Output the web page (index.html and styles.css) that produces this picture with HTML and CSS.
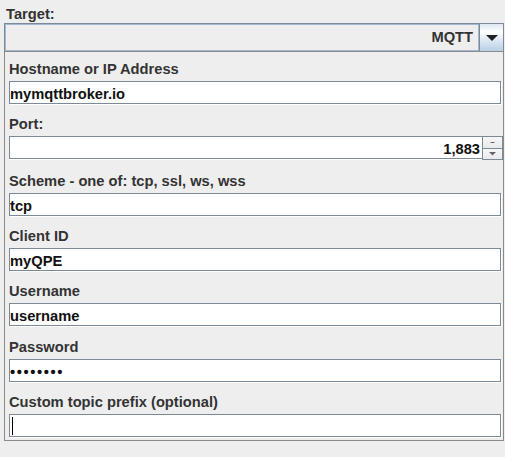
FILE: index.html
```html
<!DOCTYPE html>
<html>
<head>
<meta charset="utf-8">
<link rel="stylesheet" href="styles.css">
</head>
<body>
<div class="app">
  <div class="target-label">Target:</div>
  <div class="combo">
    <div class="combo-display">MQTT</div>
    <div class="combo-button">
      <svg width="12" height="6" viewBox="0 0 12 6"><polygon points="0,0 12,0 6,6" fill="#222"/></svg>
    </div>
  </div>
  <div class="panel">
    <div class="field-group">
      <div class="field-label">Hostname or IP Address</div>
      <div class="text-field">mymqttbroker.io</div>
    </div>
    <div class="field-group">
      <div class="field-label">Port:</div>
      <div class="spinner">
        <div class="spinner-text">1,883</div>
        <div class="spinner-buttons">
          <div class="spin-btn">
            <svg width="5" height="2" viewBox="0 0 5 2"><polygon points="1,0 4,0 5,1 0,1" fill="#666"/></svg>
          </div>
          <div class="spin-btn">
            <svg width="7" height="4" viewBox="0 0 7 4"><polygon points="0,0 7,0 3.5,3.5" fill="#666"/></svg>
          </div>
        </div>
      </div>
    </div>
    <div class="field-group">
      <div class="field-label">Scheme - one of: tcp, ssl, ws, wss</div>
      <div class="text-field">tcp</div>
    </div>
    <div class="field-group">
      <div class="field-label">Client ID</div>
      <div class="text-field">myQPE</div>
    </div>
    <div class="field-group">
      <div class="field-label">Username</div>
      <div class="text-field">username</div>
    </div>
    <div class="field-group">
      <div class="field-label">Password</div>
      <div class="text-field password">&#8226;&#8226;&#8226;&#8226;&#8226;&#8226;&#8226;&#8226;</div>
    </div>
    <div class="field-group">
      <div class="field-label">Custom topic prefix (optional)</div>
      <div class="text-field empty"><span class="caret"></span></div>
    </div>
  </div>
</div>
</body>
</html>
```

FILE: styles.css
```css
html, body {
  margin: 0;
  padding: 0;
  background: #eeeeee;
}

body {
  font-family: "Liberation Sans", Arial, sans-serif;
  font-weight: bold;
  font-size: 14.7px;
  color: #333333;
}

.app {
  padding: 6px 1px 0 4px;
}

.target-label {
  line-height: 17px;
  padding-left: 2px;
}

.combo {
  display: flex;
  box-sizing: border-box;
  height: 29px;
  border: 1px solid #7a8a99;
}

.combo-display {
  flex: 1;
  border: 1px solid #a3b8cc;
  text-align: right;
  padding: 4px 5px 0 0;
  line-height: 17px;
  color: #333333;
}

.combo-button {
  width: 23px;
  border-left: 1px solid #7a8a99;
  background: linear-gradient(to bottom, #dde8f3 0%, #ffffff 30%, #dde8f3 60%, #b8cfe5 100%);
  display: flex;
  align-items: center;
  justify-content: center;
}

.combo-button svg {
  display: block;
}

.panel {
  margin-top: -1px;
  border: 1px solid #8a8a8a;
  padding: 9px 2px 2px 4px;
}

.field-group + .field-group {
  margin-top: 12.33px;
}

.field-label {
  line-height: 17px;
  margin-bottom: 3px;
}

.text-field {
  box-sizing: border-box;
  width: 492px;
  height: 23px;
  margin-bottom: 1px;
  border: 1px solid #7a8a99;
  background: #ffffff;
  box-shadow: 1px 1px 0 #ffffff;
  padding: 4px 1px 0 0;
  line-height: 17px;
  color: #111111;
  white-space: nowrap;
  overflow: hidden;
}

.password {
  letter-spacing: 1.6px;
}

.text-field.empty {
  padding: 0;
}

.caret {
  display: block;
  width: 1px;
  height: 18px;
  margin: 2px 0 0 2px;
  background: #000000;
}

.spinner {
  display: flex;
  width: 494px;
  height: 24px;
}

.spinner-text {
  flex: 1;
  box-sizing: border-box;
  height: 23px;
  border: 1px solid #7a8a99;
  border-right: none;
  background: #ffffff;
  box-shadow: 0 1px 0 #ffffff;
  text-align: right;
  padding: 4px 2px 0 0;
  line-height: 17px;
  color: #111111;
}

.spinner-buttons {
  width: 21px;
  display: flex;
  flex-direction: column;
}

.spin-btn {
  flex: 1;
  box-sizing: border-box;
  border: 1px solid #7a8a99;
  background: linear-gradient(to bottom, #f6f6f6 0%, #eaeaea 100%);
  display: flex;
  align-items: center;
  justify-content: center;
}

.spin-btn + .spin-btn {
  border-top: none;
}

.spin-btn svg {
  display: block;
}
```
